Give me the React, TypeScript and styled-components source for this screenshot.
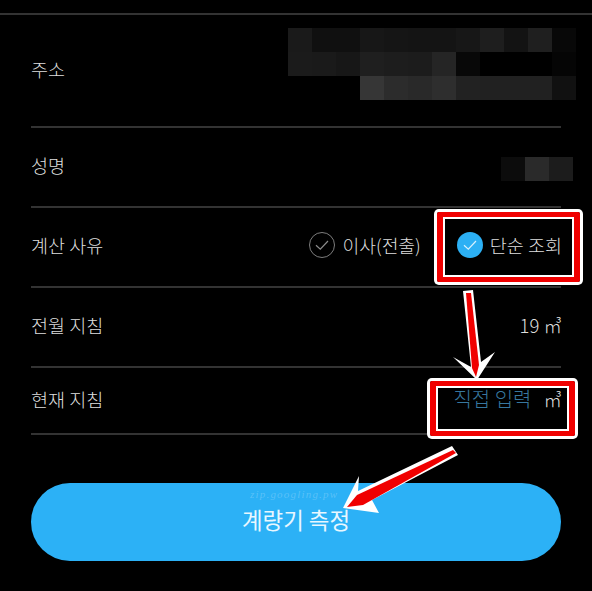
import React from "react";
import styled, { createGlobalStyle } from "styled-components";

const GlobalStyle = createGlobalStyle`
  html, body {
    margin: 0;
    padding: 0;
    background: #000;
  }
  body {
    font-family: "Noto Sans CJK KR", "Noto Sans", sans-serif;
  }
`;

const Page = styled.div`
  position: relative;
  width: 592px;
  height: 591px;
  overflow: hidden;
  background: #000;
  color: #dedede;
  padding-top: 13px;
  box-sizing: border-box;
`;

const TopLine = styled.div`
  height: 2px;
  background: #333;
`;

const Form = styled.div`
  display: flex;
  flex-direction: column;
  padding: 0 31px;
`;

const Row = styled.div<{ $height: number }>`
  display: flex;
  align-items: center;
  justify-content: space-between;
  box-sizing: border-box;
  height: ${({ $height }) => $height}px;
  padding-bottom: 4px;
  border-bottom: 2px solid #333;
  font-size: 18.5px;
  font-weight: 300;
  line-height: 24px;
`;

const Label = styled.span`
  color: #dedede;
`;

const Value = styled.span`
  display: flex;
  align-items: center;
  gap: 12px;
  margin-right: -1px;
`;

const Options = styled.div`
  display: flex;
  align-items: center;
  gap: 36px;
  margin-right: -1px;
`;

const Option = styled.div`
  display: flex;
  align-items: center;
  gap: 7px;
`;

const OptionText = styled.span<{ $narrow?: boolean }>`
  font-size: ${({ $narrow }) => ($narrow ? "18.2px" : "18.5px")};
`;

const Radio = styled.span<{ $checked?: boolean }>`
  display: flex;
  align-items: center;
  justify-content: center;
  box-sizing: border-box;
  width: 26px;
  height: 26px;
  border-radius: 50%;
  border: ${({ $checked }) => ($checked ? "none" : "1px solid #7d7d7d")};
  background: ${({ $checked }) => ($checked ? "#2cb0f4" : "transparent")};
  color: ${({ $checked }) => ($checked ? "#d8f1fd" : "#8c8c8c")};
`;

const DirectInput = styled.span`
  font-size: 20px;
  color: #37779f;
`;

const SubmitButton = styled.button`
  display: block;
  width: 530px;
  height: 78px;
  margin: 48px auto 0;
  padding: 0 0 6px;
  border: none;
  border-radius: 39px;
  background: #2cb1f6;
  color: #e8f7ff;
  font-family: inherit;
  font-size: 22.4px;
  font-weight: 400;
`;

const Mosaic = styled.div<{ $top: number; $left: number; $cols: number }>`
  position: absolute;
  top: ${({ $top }) => $top}px;
  left: ${({ $left }) => $left}px;
  display: grid;
  grid-template-columns: repeat(${({ $cols }) => $cols}, 24px);
  grid-auto-rows: 24px;
`;

const MosaicCell = styled.div<{ $shade: string }>`
  background: ${({ $shade }) => $shade};
`;

const Callout = styled.div<{ $top: number; $left: number; $width: number; $height: number }>`
  position: absolute;
  top: ${({ $top }) => $top}px;
  left: ${({ $left }) => $left}px;
  width: ${({ $width }) => $width}px;
  height: ${({ $height }) => $height}px;
  box-sizing: border-box;
  border: solid #f00000;
  border-width: 5px 6px;
  border-radius: 2px;
  box-shadow: 0 0 0 3px #fff, inset 0 0 0 2px #fff;
`;

const ArrowLayer = styled.svg`
  position: absolute;
  top: 0;
  left: 0;
`;

const Watermark = styled.span`
  position: absolute;
  top: 488px;
  left: 250px;
  font-family: "Liberation Serif", serif;
  font-style: italic;
  font-size: 11px;
  letter-spacing: 1.2px;
  color: rgba(255, 255, 255, 0.22);
`;

const addressShades = [
  "#1a1a1a", "#101010", "#101010", "#171717", "#151515", "#141414", "#141414", "#171717", "#1e1e1e", "#131313", "#1f1f1f", "#080808",
  "#1b1b1b", "#1a1a1a", "#171717", "#1f1f1f", "#1d1d1d", "#1c1c1c", "#252525", "#080808", "#000000", "#000000", "#000000", "#050505",
  "#000000", "#000000", "#000000", "#363636", "#2c2c2c", "#292929", "#2e2e2e", "#222222", "#212121", "#212121", "#212121", "#111111",
];

const nameShades = ["#0c0c0c", "#2a2a2a", "#1c1c1c"];

function Check() {
  return (
    <svg width="16" height="12" viewBox="0 0 16 12" fill="none" stroke="currentColor" strokeWidth="1.2">
      <path d="M2 6.2 6.3 10.2 14 2" />
    </svg>
  );
}

export default function App() {
  return (
    <Page>
      <GlobalStyle />
      <TopLine />
      <Form>
        <Row $height={113}>
          <Label>주소</Label>
        </Row>
        <Row $height={80}>
          <Label>성명</Label>
        </Row>
        <Row $height={80}>
          <Label>계산 사유</Label>
          <Options>
            <Option>
              <Radio>
                <Check />
              </Radio>
              <OptionText $narrow>이사(전출)</OptionText>
            </Option>
            <Option>
              <Radio $checked>
                <Check />
              </Radio>
              <OptionText>단순 조회</OptionText>
            </Option>
          </Options>
        </Row>
        <Row $height={80}>
          <Label>전월 지침</Label>
          <Value>19 ㎥</Value>
        </Row>
        <Row $height={67}>
          <Label>현재 지침</Label>
          <Value>
            <DirectInput>직접 입력</DirectInput>
            <span>㎥</span>
          </Value>
        </Row>
        <SubmitButton>계량기 측정</SubmitButton>
      </Form>

      <Mosaic $top={28} $left={288} $cols={12}>
        {addressShades.map((shade, i) => (
          <MosaicCell key={i} $shade={shade} />
        ))}
      </Mosaic>
      <Mosaic $top={157} $left={501} $cols={3}>
        {nameShades.map((shade, i) => (
          <MosaicCell key={i} $shade={shade} />
        ))}
      </Mosaic>

      <Watermark>zip.googling.pw</Watermark>

      <Callout $top={212} $left={437} $width={143} $height={70} />
      <Callout $top={381} $left={430} $width={145} $height={55} />

      <ArrowLayer width="592" height="591" viewBox="0 0 592 591">
        <path d="M463 291 473 290 481 362 495 352 477 380 453 357 471 367Z" fill="#fff" />
        <path d="M466 293 471 293 479 365 476 377 472 368Z" fill="#f00000" />
        <path d="M452 446 458 455 372 500 379 513 343 508 359 476 358 491Z" fill="#fff" />
        <path d="M453 450 456 453 363 505 347 507 357 495Z" fill="#f00000" />
      </ArrowLayer>
    </Page>
  );
}
